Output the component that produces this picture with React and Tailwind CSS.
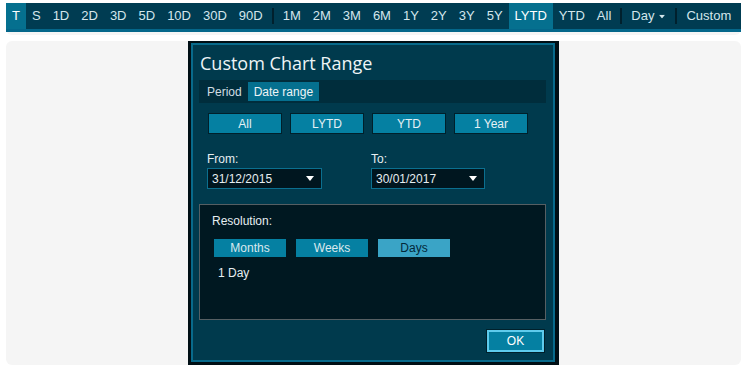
const ranges1 = ["T", "S", "1D", "2D", "3D", "5D", "10D", "30D", "90D"];
const ranges2 = ["1M", "2M", "3M", "6M", "1Y", "2Y", "3Y", "5Y", "LYTD", "YTD", "All"];
const active = ["T", "LYTD"];

function Caret({ className = "" }) {
  return (
    <svg width="8" height="5" viewBox="0 0 8 5" className={className}>
      <path d="M0 0h8L4 5z" fill="currentColor" />
    </svg>
  );
}

function ToolButton({ label }) {
  const on = active.includes(label);
  return (
    <div className={`flex items-center px-[6px] ${on ? "bg-[#05708f] text-white" : ""}`}>{label}</div>
  );
}

function Sep() {
  return <div className="mx-[3px] my-[5px] w-[2px] bg-[#00202d]" />;
}

function DateInput({ value }) {
  return (
    <div className="flex h-[21px] items-center justify-between border border-[#0b6f8f] bg-[#00161f] pl-[4px] pr-[7px] text-[12px] text-[#e6eef1]">
      <span>{value}</span>
      <Caret className="text-white" />
    </div>
  );
}

export default function App() {
  return (
    <div className="h-[374px] w-[755px] bg-white pt-[3px] pl-[6px] font-['Liberation_Sans',Arial,sans-serif]">
      {/* range toolbar */}
      <div className="w-[735px] rounded-b-[6px] bg-[#f5f5f5] pb-[3px]">
        <div className="flex h-[29px] border-b-[3px] border-[#04678a] bg-[#003c52] text-[13px] text-[#d4e6ec]">
          {ranges1.map((r) => (
            <ToolButton key={r} label={r} />
          ))}
          <Sep />
          {ranges2.map((r) => (
            <ToolButton key={r} label={r} />
          ))}
          <Sep />
          <div className="flex items-center gap-[4px] px-[6px]">
            Day <Caret className="mt-[1px] scale-75" />
          </div>
          <Sep />
          <div className="flex items-center px-[6px]">Custom</div>
        </div>
      </div>

      {/* chart area with dialog */}
      <div className="mt-[6px] flex h-[324px] w-[735px] justify-center rounded-[6px] bg-[#f5f5f5]">
        <div className="w-[371px] bg-[#000f15] pt-[2px] pl-[3px] pr-[4px] pb-[3px]">
          <div className="flex h-full flex-col border-2 border-[#086a8b] bg-[#003a4d]">
            <div className="mt-[6px] pl-[7px] font-['Open_Sans',sans-serif] text-[18px] leading-[24px] text-[#eef4f6]">
              Custom Chart Range
            </div>

            <div className="mt-[5px] mr-[7px] ml-[6px] flex h-[23px] items-center bg-[#002d3c] px-[2px] text-[12px]">
              <div className="px-[6px] text-[#d0dde2]">Period</div>
              <div className="flex h-[19px] items-center bg-[#05708f] px-[6px] text-[#eef4f6]">Date range</div>
            </div>

            <div className="mt-[10px] flex gap-[8px] pl-[15px] text-[12px] text-[#e6f1f5]">
              {["All", "LYTD", "YTD", "1 Year"].map((b) => (
                <div key={b} className="flex h-[21px] w-[74px] items-center justify-center border border-[#00202b] bg-[#0580a2]">
                  {b}
                </div>
              ))}
            </div>

            <div className="mt-[18px] flex pl-[14px] text-[12px] text-[#e6eef1]">
              <div className="w-[164px]">
                <div className="leading-[14px]">From:</div>
                <div className="mt-[2px] w-[115px]">
                  <DateInput value="31/12/2015" />
                </div>
              </div>
              <div>
                <div className="leading-[14px]">To:</div>
                <div className="mt-[2px] w-[114px]">
                  <DateInput value="30/01/2017" />
                </div>
              </div>
            </div>

            <div className="mt-[15px] mr-[7px] ml-[6px] h-[116px] border border-[#565f63] bg-[#001821] pt-[9px] pl-[12px] text-[12px] text-[#e6eef1]">
              <div className="leading-[14px]">Resolution:</div>
              <div className="mt-[11px] ml-[2px] flex gap-[10px]">
                <div className="flex h-[18px] w-[72px] items-center justify-center bg-[#0580a2] text-[#dbe9ee]">Months</div>
                <div className="flex h-[18px] w-[72px] items-center justify-center bg-[#0580a2] text-[#dbe9ee]">Weeks</div>
                <div className="flex h-[18px] w-[72px] items-center justify-center bg-[#3aa4c6] text-[#02283a]">Days</div>
              </div>
              <div className="mt-[9px] ml-[6px] leading-[14px]">1 Day</div>
            </div>

            <div className="mt-[9px] flex justify-end pr-[8px]">
              <div className="border border-[#00202b]">
                <div className="flex h-[22px] w-[57px] items-center justify-center border-2 border-[#5ecbec] bg-[#0580a2] text-[12px] text-white">
                  OK
                </div>
              </div>
            </div>
          </div>
        </div>
      </div>
    </div>
  );
}
